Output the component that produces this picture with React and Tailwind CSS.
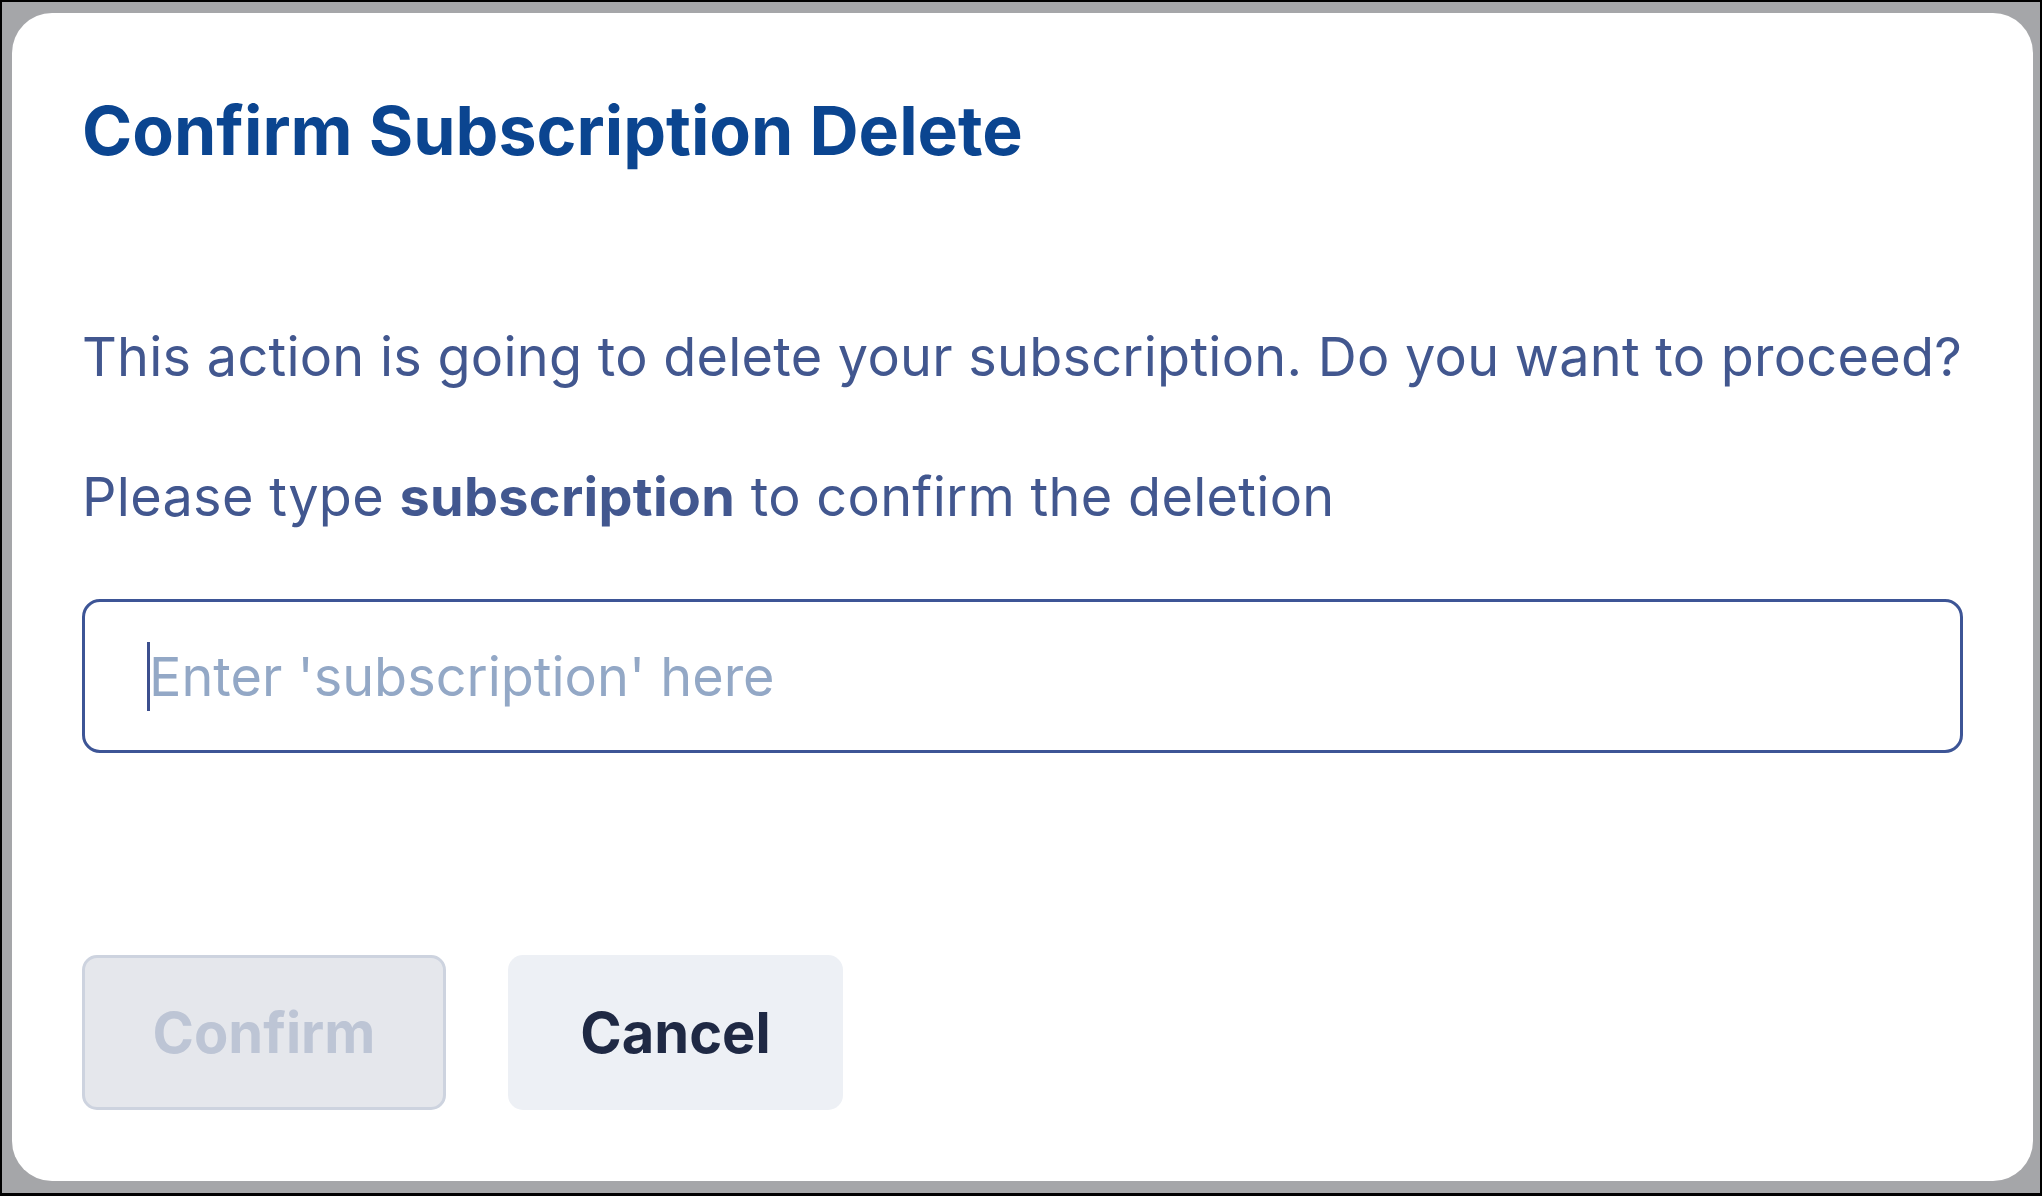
import { useState } from "react";

export default function App() {
  const [value, setValue] = useState("");
  const word = "subscription";
  const canConfirm = value === word;

  return (
    <div className="w-[2042px] h-[1196px] bg-[#a5a6a9] border-black border-t-2 border-l-2 border-r-2 border-b-[3px] pt-[11px] pl-[10px] pr-[7px] pb-[12px] font-['Inter',sans-serif]">
      {/* Dialog */}
      <div className="h-full bg-white rounded-[40px] px-[70px] pt-[77px] flex flex-col">
        <h1 className="text-[68px] leading-[80px] font-bold text-[#0b4590]">
          Confirm Subscription Delete
        </h1>

        <p className="mt-[152px] text-[54px] leading-[70px] tracking-[0.25px] text-[#42578f] whitespace-nowrap">
          This action is going to delete your subscription. Do you want to proceed?
        </p>
        <p className="mt-[70px] text-[54px] leading-[70px] tracking-[0.3px] text-[#42578f] whitespace-nowrap">
          Please type <span className="font-bold">{word}</span> to confirm the deletion
        </p>

        {/* Confirmation input */}
        <div className="relative mt-[67px]">
          <input
            type="text"
            value={value}
            onChange={(e) => setValue(e.target.value)}
            placeholder={`Enter '${word}' here`}
            className="w-full h-[154px] border-[3px] border-[#3d5596] rounded-[18px] pl-[64px] pr-6 text-[54px] text-[#42578f] placeholder:text-[#93a8c6] outline-none"
          />
          {/* caret */}
          <span className="absolute left-[65px] top-[43px] w-[3px] h-[69px] bg-[#3c4f8e]"></span>
        </div>

        {/* Actions */}
        <div className="mt-[202px] flex gap-[62px]">
          <button
            disabled={!canConfirm}
            className="w-[364px] h-[155px] rounded-[15px] border-[3px] border-[#cdd3df] bg-[#e5e7ec] text-[56px] font-bold text-[#bdc5d5]"
          >
            Confirm
          </button>
          <button className="w-[335px] h-[155px] rounded-[15px] bg-[#edf0f5] text-[56px] font-bold text-[#1f2944]">
            Cancel
          </button>
        </div>
      </div>
    </div>
  );
}
